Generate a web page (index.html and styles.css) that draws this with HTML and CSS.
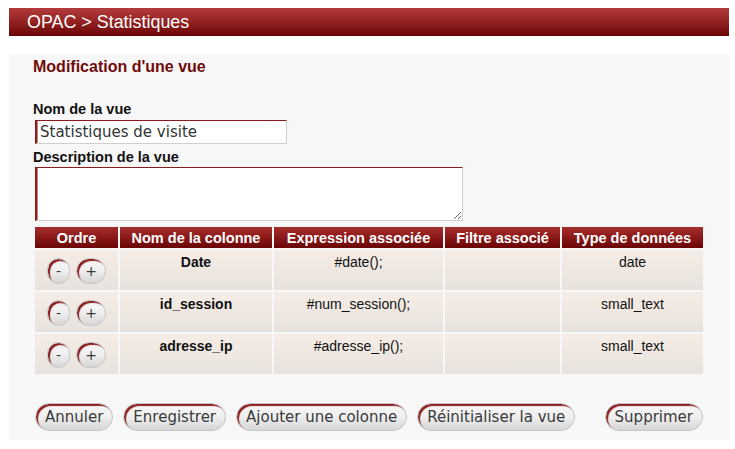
FILE: index.html
```html
<!DOCTYPE html>
<html lang="fr">
<head>
<meta charset="utf-8">
<title>OPAC &gt; Statistiques</title>
<link rel="stylesheet" href="styles.css">
</head>
<body>
<div class="page">
  <header class="topbar">OPAC &gt; Statistiques</header>
  <main class="panel">
    <h1 class="title">Modification d'une vue</h1>
    <form class="form">
      <label class="label" for="nom">Nom de la vue</label>
      <input class="text-input" id="nom" type="text" value="Statistiques de visite">
      <label class="label label-desc" for="desc">Description de la vue</label>
      <textarea class="text-area" id="desc"></textarea>
      <table class="columns">
        <thead>
          <tr>
            <th class="col-ordre">Ordre</th>
            <th class="col-nom">Nom de la colonne</th>
            <th class="col-expr">Expression associée</th>
            <th class="col-filtre">Filtre associé</th>
            <th class="col-type">Type de données</th>
          </tr>
        </thead>
        <tbody>
          <tr>
            <td class="cell-ordre"><div class="order-btns"><button type="button" class="btn btn-small">-</button><button type="button" class="btn btn-small">+</button></div></td>
            <td class="cell-name">Date</td>
            <td>#date();</td>
            <td></td>
            <td>date</td>
          </tr>
          <tr>
            <td class="cell-ordre"><div class="order-btns"><button type="button" class="btn btn-small">-</button><button type="button" class="btn btn-small">+</button></div></td>
            <td class="cell-name">id_session</td>
            <td>#num_session();</td>
            <td></td>
            <td>small_text</td>
          </tr>
          <tr>
            <td class="cell-ordre"><div class="order-btns"><button type="button" class="btn btn-small">-</button><button type="button" class="btn btn-small">+</button></div></td>
            <td class="cell-name">adresse_ip</td>
            <td>#adresse_ip();</td>
            <td></td>
            <td>small_text</td>
          </tr>
        </tbody>
      </table>
      <div class="actions">
        <button type="button" class="btn">Annuler</button>
        <button type="button" class="btn">Enregistrer</button>
        <button type="button" class="btn">Ajouter une colonne</button>
        <button type="button" class="btn">Réinitialiser la vue</button>
        <button type="button" class="btn btn-delete">Supprimer</button>
      </div>
    </form>
  </main>
</div>
</body>
</html>
```

FILE: styles.css
```css
* {
  box-sizing: border-box;
}

html, body {
  background: #ffffff;
}

body {
  margin: 8px 6px 0 9px;
  font-family: "Liberation Sans", Arial, sans-serif;
  color: #111;
}

.page {
  width: 720px;
}

.topbar {
  height: 28px;
  padding-left: 18px;
  display: flex;
  align-items: center;
  color: #ffffff;
  font-size: 17.9px;
  background: linear-gradient(to bottom, #b23b3b 0%, #9a2727 40%, #6c0505 100%);
  margin-bottom: 18px;
}

.panel {
  display: block;
  background: #f7f7f7;
  padding: 4px 24px 9px 24px;
}

.title {
  margin: 0;
  font-size: 16px;
  line-height: 18px;
  font-weight: bold;
  color: #700b0b;
}

.form {
  display: flex;
  flex-direction: column;
  align-items: flex-start;
  margin-top: 25px;
}

.label {
  display: block;
  font-size: 14.5px;
  line-height: 17px;
  font-weight: bold;
  color: #111;
}

.label-desc {
  margin-top: 5px;
}

.text-input,
.text-area {
  margin: 2px 0 0 2px;
  border: 1px solid #cfcfcf;
  border-top-color: #8a1c1c;
  border-left: 2px solid #8a1c1c;
  box-shadow: inset 1px 0 0 #c48a8a;
  background: #ffffff;
  font-family: "DejaVu Sans", sans-serif;
  color: #333;
  outline: none;
}

.text-input {
  width: 252px;
  height: 24px;
  padding: 0 3px;
  font-size: 15px;
}

.text-area {
  display: block;
  margin-top: 1px;
  width: 428px;
  height: 54px;
  resize: both;
  font-size: 14px;
}

.columns {
  margin-top: 4px;
  border-collapse: separate;
  border-spacing: 2px;
  table-layout: fixed;
}

.columns th {
  height: 21px;
  padding: 0;
  color: #ffffff;
  font-size: 14.5px;
  font-weight: bold;
  text-align: center;
  vertical-align: middle;
  background: linear-gradient(to bottom, #a52d2d 0%, #8e1b1b 45%, #690606 100%);
}

.col-ordre { width: 83px; }
.col-nom { width: 152px; }
.col-expr { width: 169px; }
.col-filtre { width: 115px; }
.col-type { width: 141px; }

.columns td {
  height: 40px;
  padding: 4px 4px 0 4px;
  font-size: 14px;
  line-height: 16px;
  text-align: center;
  vertical-align: top;
  color: #111;
  background: linear-gradient(to bottom, #f5ede5 0%, #e8e2de 100%);
}

.columns td.cell-name {
  font-weight: bold;
}

.columns td.cell-ordre {
  padding: 0;
  vertical-align: middle;
}

.order-btns {
  display: flex;
  justify-content: center;
  gap: 6px;
  padding-top: 1px;
}

.btn {
  height: 28px;
  padding: 0 9px;
  border: 1px solid #c6c6c6;
  border-radius: 14px;
  background: linear-gradient(to bottom, #f8f8f8 0%, #eeeeee 50%, #d6d6d6 100%);
  box-shadow: inset 2px 2px 1px #8b1f1f;
  font-family: "DejaVu Sans", sans-serif;
  font-size: 15px;
  font-weight: normal;
  color: #3a3a3a;
  cursor: pointer;
}

.btn-small {
  height: 26px;
  padding: 0 8px;
  border-radius: 13px;
  font-size: 14px;
}

.actions {
  display: flex;
  gap: 10px;
  width: 668px;
  margin: 27px 0 0 2px;
}

.btn-delete {
  margin-left: auto;
}
```
